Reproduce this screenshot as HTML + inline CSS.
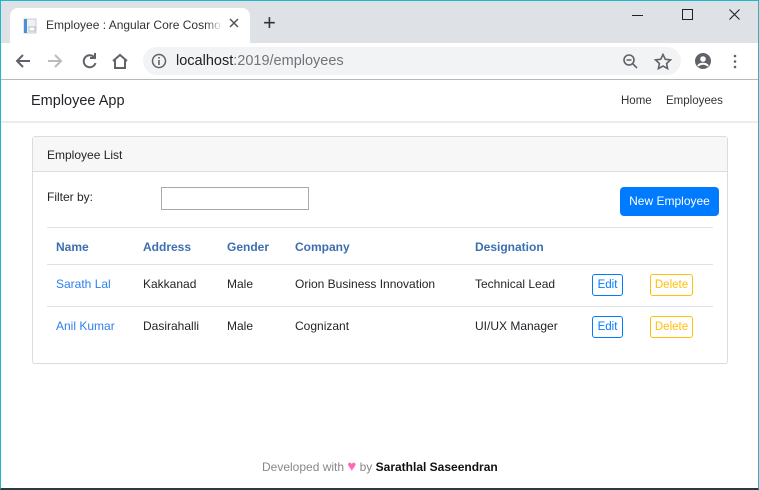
<!DOCTYPE html>
<html><head><meta charset="utf-8"><style>
*{box-sizing:border-box;margin:0;padding:0}
body{width:759px;height:490px;position:relative;overflow:hidden;background:#fff;font-family:"Liberation Sans",sans-serif;font-size:12px;color:#212529}
.a{position:absolute;white-space:nowrap}
.frame{position:absolute;inset:0;border:1px solid #1eb8c8;border-bottom:2px solid #2a3b40;pointer-events:none;z-index:10}
.btn{position:absolute;border:1px solid;border-radius:3px;font-size:11.5px;text-align:center;line-height:20px;height:22px}
</style></head><body>
<div class="frame"></div>
<div class="a" style="left:0;top:0;width:759px;height:43px;background:#dee1e6"></div>
<div class="a" style="left:10px;top:8px;width:240px;height:36px;background:#fff;border-radius:8px 8px 0 0"></div>
<svg class="a" style="left:22px;top:18px" width="16" height="16"><rect x="2" y="1" width="12" height="14" fill="#eef0f4" stroke="#c7ccd6"/><rect x="2" y="1" width="3" height="14" fill="#4a90d9"/><rect x="7" y="9" width="6" height="4" fill="#fff" stroke="#bbb"/></svg>
<div class="a" style="left:46px;top:18px;width:175px;overflow:hidden;font-size:12px;color:#333">Employee : Angular Core Cosmos</div>
<div class="a" style="left:205px;top:14px;width:18px;height:20px;background:linear-gradient(to right,rgba(255,255,255,0),#fff)"></div>
<svg class="a" style="left:229px;top:18px" width="10" height="10"><path d="M1 1l8 8M9 1l-8 8" stroke="#555" stroke-width="1.5"/></svg>
<div class="a" style="left:263px;top:12px;font-size:22px;color:#333;line-height:22px">+</div>
<div class="a" style="left:632px;top:15px;width:11px;height:1px;background:#222"></div>
<div class="a" style="left:682px;top:9px;width:11px;height:11px;border:1px solid #222"></div>
<svg class="a" style="left:729px;top:9px" width="11" height="11"><path d="M0.5 0.5l10 10M10.5 0.5l-10 10" stroke="#222" stroke-width="1.1"/></svg>
<svg class="a" style="left:14px;top:52px" width="120" height="18" fill="none" stroke-width="2">
<path d="M16 9H3M9 3L3 9l6 6" stroke="#5f6368"/>
<path d="M34 9h13M41 3l6 6-6 6" stroke="#bbb"/>
<path d="M80 5a6 6 0 1 0 1.5 6" stroke="#5f6368"/><path d="M81 1v5h-5" stroke="#5f6368"/>
<path d="M99 9l7-6 7 6M101 8v8h10V8" stroke="#5f6368"/>
</svg>
<div class="a" style="left:143px;top:47px;width:538px;height:28px;background:#f1f3f4;border-radius:14px"></div>
<svg class="a" style="left:151px;top:53px" width="16" height="16"><circle cx="8" cy="8" r="6.5" fill="none" stroke="#5f6368" stroke-width="1.5"/><rect x="7.2" y="7" width="1.6" height="5" fill="#5f6368"/><rect x="7.2" y="4" width="1.6" height="1.6" fill="#5f6368"/></svg>
<div class="a" style="left:176px;top:53px;font-size:14.5px;color:#202124">localhost<span style="color:#70757a">:2019/employees</span></div>
<svg class="a" style="left:622px;top:53px" width="120" height="18" fill="none" stroke="#5f6368" stroke-width="1.6">
<circle cx="7" cy="7" r="5"/><path d="M11 11l4 4M4.5 7h5"/>
<path d="M41 1.5l2.3 4.8 5.2.6-3.9 3.6 1 5.1-4.6-2.6-4.6 2.6 1-5.1-3.9-3.6 5.2-.6z"/>
<circle cx="81" cy="8" r="8" fill="#5f6368" stroke="none"/><circle cx="81" cy="6" r="2.8" fill="#fff" stroke="none"/><path d="M76 13c2-3 8-3 10 0" stroke="#fff" stroke-width="2"/>
<circle cx="113" cy="3" r="1.3" fill="#5f6368" stroke="none"/><circle cx="113" cy="8.5" r="1.3" fill="#5f6368" stroke="none"/><circle cx="113" cy="14" r="1.3" fill="#5f6368" stroke="none"/>
</svg>
<div class="a" style="left:0;top:79px;width:759px;height:1px;background:#b8b8b8"></div>
<div class="a" style="left:0;top:121px;width:759px;height:2px;background:#ececec"></div>
<div class="a" style="left:31px;top:93px;font-size:14.5px;color:#212529">Employee App</div>
<div class="a" style="left:621px;top:95px;font-size:11.5px;color:#333">Home</div>
<div class="a" style="left:666px;top:95px;font-size:11.5px;color:#333">Employees</div>
<div class="a" style="left:32px;top:136px;width:696px;height:228px;border:1px solid #dcdcdc;border-radius:3px"></div>
<div class="a" style="left:33px;top:137px;width:694px;height:35px;background:#f7f7f7;border-bottom:1px solid #dcdcdc"></div>
<div class="a" style="left:47px;top:148px">Employee List</div>
<div class="a" style="left:47px;top:190px">Filter by:</div>
<div class="a" style="left:161px;top:187px;width:148px;height:23px;border:1px solid #a9a9a9"></div>
<div class="a" style="left:620px;top:187px;width:99px;height:29px;background:#007bff;border-radius:4px;color:#fff;text-align:center;line-height:29px;font-size:12px">New Employee</div>
<div class="a" style="left:47px;top:227px;width:666px;height:1px;background:#dee2e6"></div>
<div class="a" style="left:47px;top:264px;width:666px;height:1px;background:#dee2e6"></div>
<div class="a" style="left:47px;top:306px;width:666px;height:1px;background:#dee2e6"></div>
<div class="a" style="left:0;top:240px;font-weight:bold;color:#3c6fb0">
<span class="a" style="left:56px">Name</span><span class="a" style="left:143px">Address</span><span class="a" style="left:227px">Gender</span><span class="a" style="left:295px">Company</span><span class="a" style="left:475px">Designation</span></div>
<div class="a" style="left:0;top:277px">
<span class="a" style="left:56px;color:#2f80ed">Sarath Lal</span><span class="a" style="left:143px">Kakkanad</span><span class="a" style="left:227px">Male</span><span class="a" style="left:295px">Orion Business Innovation</span><span class="a" style="left:475px">Technical Lead</span></div>
<div class="a" style="left:0;top:319px">
<span class="a" style="left:56px;color:#2f80ed">Anil Kumar</span><span class="a" style="left:143px">Dasirahalli</span><span class="a" style="left:227px">Male</span><span class="a" style="left:295px">Cognizant</span><span class="a" style="left:475px">UI/UX Manager</span></div>
<div class="btn" style="left:592px;top:274px;width:31px;border-color:#007bff;color:#007bff">Edit</div>
<div class="btn" style="left:650px;top:274px;width:43px;border-color:#ffc107;color:#ffc107">Delete</div>
<div class="btn" style="left:592px;top:316px;width:31px;border-color:#007bff;color:#007bff">Edit</div>
<div class="btn" style="left:650px;top:316px;width:43px;border-color:#ffc107;color:#ffc107">Delete</div>
<div class="a" style="left:262px;top:460px;color:#888">Developed with <span style="color:#ff69b4;font-size:15px;line-height:12px">♥</span> by <b style="color:#111">Sarathlal Saseendran</b></div>
</body></html>
